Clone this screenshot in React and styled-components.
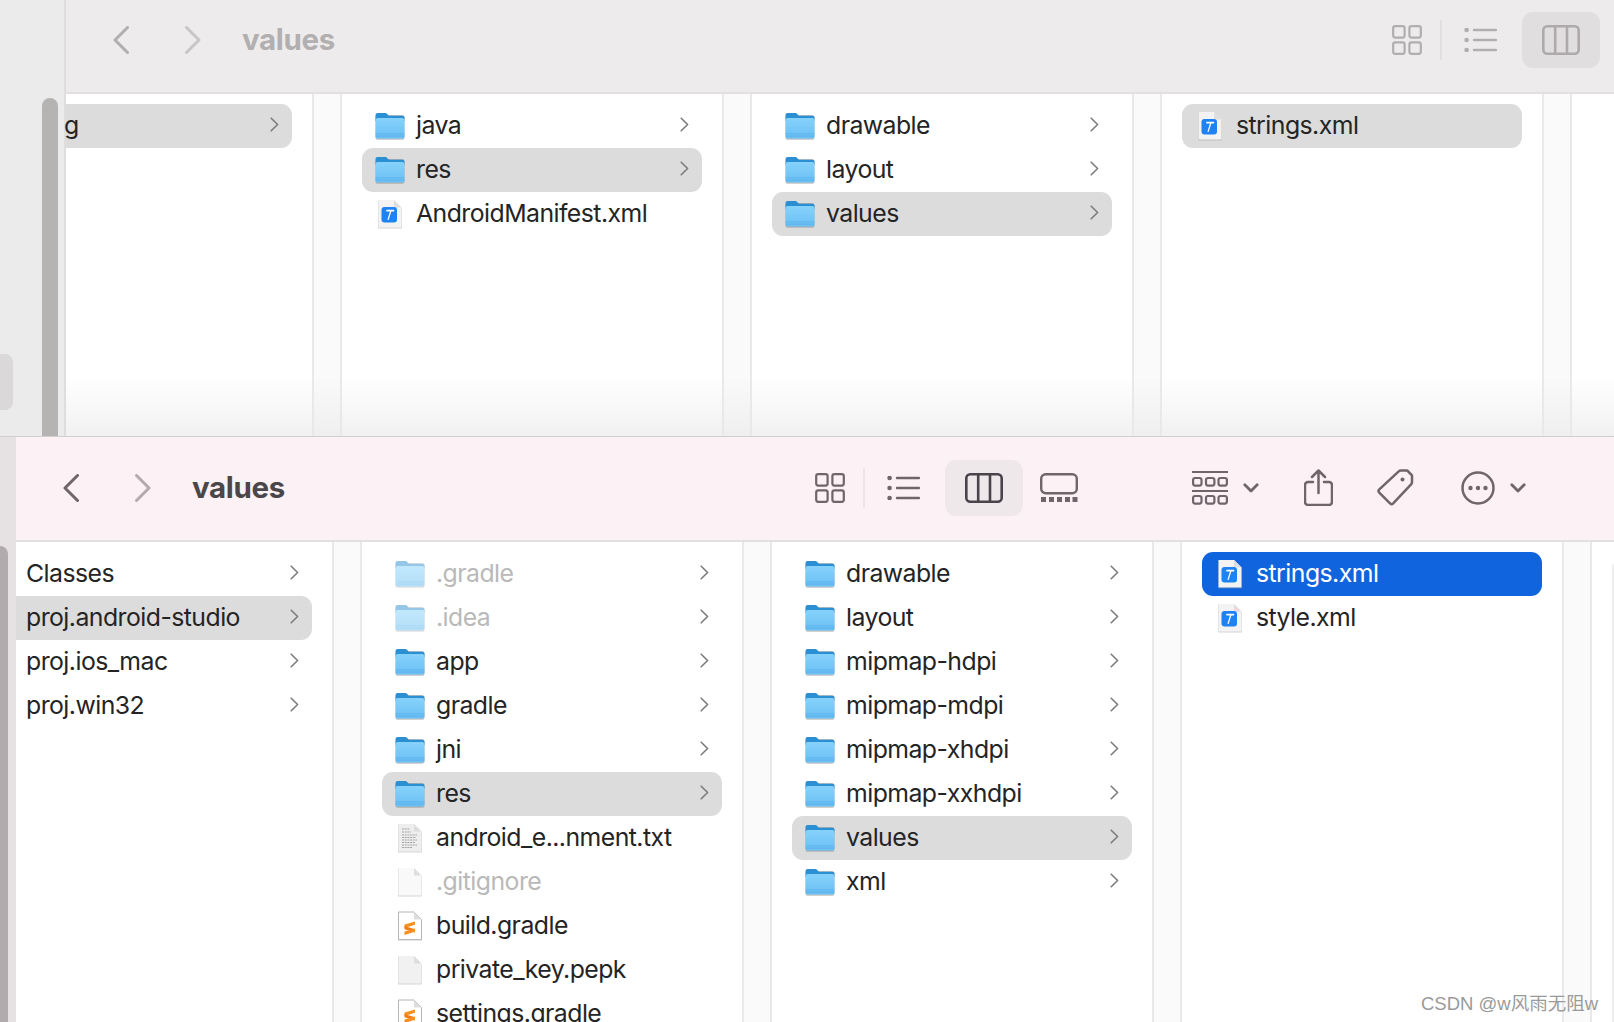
import React from "react";
import styled, { createGlobalStyle } from "styled-components";

const Global = createGlobalStyle`
  html, body { margin: 0; padding: 0; background: #fff; }
  body { font-family: Inter, "Noto Sans", sans-serif; width: 1614px; height: 1022px; overflow: hidden; position: relative; }
  * { box-sizing: border-box; }
`;

const Win = styled.section`
  display: flex;
  height: ${p => p.$h}px;
  overflow: hidden;
  border-bottom: ${p => (p.$edge ? "1px solid #cfcfcf" : "none")};
`;
const Strip = styled.div`
  flex: none;
  width: ${p => p.$w}px;
  position: relative;
  background: ${p => p.$bg};
  border-right: ${p => (p.$edge ? "2px solid #dfdddd" : "none")};
`;
const Thumb = styled.div`
  position: absolute;
  left: ${p => p.$l}px; top: ${p => p.$t}px; bottom: 0; width: ${p => p.$w}px;
  background: ${p => p.$c};
  border-radius: ${p => p.$r};
`;
const SideSel = styled.div`
  position: absolute;
  left: 0; top: 354px; width: 13px; height: 56px;
  background: #dbd8d9;
  border-radius: 0 8px 8px 0;
`;
const Main = styled.div`
  flex: 1; min-width: 0; display: flex; flex-direction: column;
`;
const Toolbar = styled.header`
  flex: none;
  height: ${p => p.$h}px;
  display: flex;
  align-items: center;
  padding: 0 ${p => p.$pr}px ${p => p.$pb}px ${p => p.$pl}px;
  background: ${p => p.$bg};
  color: ${p => p.$fg};
  border-bottom: 2px solid #e2e0e1;
  svg { display: block; flex: none; }
`;
const Title = styled.h1`
  margin: 0 auto 0 41px;
  font: 650 29.5px/1 Inter, sans-serif;
  letter-spacing: -.35px;
  color: ${p => p.$c};
`;
const Slot = styled.span`
  flex: none;
  display: block;
  margin-left: ${p => p.$ml || 0}px;
  opacity: ${p => p.$o || 1};
`;
const Sep = styled.i`
  flex: none;
  display: block;
  width: 2px; height: 40px;
  margin-left: ${p => p.$ml}px;
  background: ${p => p.$c};
`;
const ActiveBtn = styled.span`
  flex: none;
  display: flex; align-items: center; justify-content: center;
  width: 78px; height: 56px;
  margin-left: ${p => p.$ml}px;
  border-radius: 11px;
  background: ${p => p.$bg};
  color: ${p => p.$fg};
`;
const Columns = styled.div`
  flex: 1; min-height: 0; display: flex; background: #fff;
  position: relative;
  &::after {
    content: "";
    display: ${p => (p.$fade ? "block" : "none")};
    position: absolute;
    left: 0; right: 0; bottom: 0; height: 60px;
    background: linear-gradient(to bottom, rgba(235,235,235,0), rgba(232,232,232,.6));
    pointer-events: none;
  }
`;
const Col = styled.div`
  flex: none;
  width: ${p => p.$w}px;
  padding: ${p => p.$pt}px 20px 0 ${p => p.$pl ?? 20}px;
  display: flex; flex-direction: column;
`;
const Gutter = styled.div`
  flex: none;
  width: 30px;
  background: #fafafa;
  border-left: 2px solid #e9e9e9;
  border-right: 2px solid #e9e9e9;
`;
const NextPane = styled.div`
  flex: 1;
  padding: ${p => p.$pt}px 0 0 20px;
  display: flex;
  &::before {
    content: "";
    flex: 1;
    background: #eeeeee;
    border-radius: 8px 0 0 0;
  }
`;
const RowBox = styled.div`
  flex: none;
  height: 44px;
  display: flex; align-items: center;
  padding: 0 13px 0 ${p => p.$pl}px;
  border-radius: ${p => (p.$flat ? "0 11px 11px 0" : "11px")};
  background: ${p => (p.$sel === "blue" ? "#1065de" : p.$sel ? "#dcdcdc" : "transparent")};
  color: ${p => (p.$sel === "blue" ? "#fff" : p.$dim ? "#b9b9b9" : "#242424")};
  font: 400 24.8px/1.24 Inter, sans-serif;
  letter-spacing: -.54px;
  svg { display: block; flex: none; }
`;
const IconSlot = styled.span`
  flex: none; width: 30px; margin-right: 11px;
  display: flex; justify-content: center;
  opacity: ${p => (p.$dim ? 0.5 : 1)};
`;
const Label = styled.span`
  flex: 1; white-space: nowrap; overflow: visible;
  padding-bottom: 2px;
  text-indent: ${p => p.$indent || 0}px;
`;
const ChevWrap = styled.span`
  flex: none; display: block; margin-bottom: 3px;
`;
const Mark = styled.div`
  position: absolute;
  left: 1421px; top: 992px;
  font: 400 18.5px/24px "Liberation Sans", "Noto Sans CJK SC", sans-serif;
  color: #9a9a9a;
  text-shadow: 0 0 1px #fff;
  white-space: nowrap;
`;

const Sv = ({ w, h, sw = 2.5, children }) => (
  <svg width={w} height={h} viewBox={`0 0 ${w} ${h}`} fill="none" stroke="currentColor" strokeWidth={sw} strokeLinecap="round" strokeLinejoin="round">{children}</svg>
);
const Back = () => <Sv w={16} h={28} sw={3}><path d="M14.5 1.5 2 14l12.5 12.5" /></Sv>;
const Fwd = () => <Sv w={16} h={28} sw={3}><path d="M1.5 1.5 14 14 1.5 26.5" /></Sv>;
const Grid = () => (
  <Sv w={30} h={30} sw={2.2}>
    <rect x="1.2" y="1.2" width="11.4" height="11.4" rx="2" /><rect x="17.4" y="1.2" width="11.4" height="11.4" rx="2" />
    <rect x="1.2" y="17.4" width="11.4" height="11.4" rx="2" /><rect x="17.4" y="17.4" width="11.4" height="11.4" rx="2" />
  </Sv>
);
const List = () => (
  <Sv w={33} h={24} sw={2.4}>
    <path d="M10 2h22M10 12h22M10 22h22" />
    <g fill="currentColor" stroke="none"><circle cx="2.6" cy="2" r="2.3" /><circle cx="2.6" cy="12" r="2.3" /><circle cx="2.6" cy="22" r="2.3" /></g>
  </Sv>
);
const ColsIcon = () => (
  <Sv w={38} h={30} sw={2.6}>
    <rect x="1.3" y="1.3" width="35.4" height="27.4" rx="4" /><path d="M13.2 1.5v27M25 1.5v27" />
  </Sv>
);
const Gallery = () => (
  <Sv w={38} h={30} sw={2.4}>
    <rect x="1.2" y="1.2" width="35.6" height="19" rx="4.5" />
    <g fill="currentColor" stroke="none">
      <rect x="1" y="24" width="5" height="5" /><rect x="9" y="24" width="5" height="5" /><rect x="17" y="24" width="5" height="5" /><rect x="25" y="24" width="5" height="5" /><rect x="32.5" y="24" width="5" height="5" />
    </g>
  </Sv>
);
const GroupIcon = () => (
  <Sv w={36} h={34} sw={2.2}>
    <path d="M0 1h36M0 20h36" strokeLinecap="butt" />
    {[7, 25].map(y => [1.1, 14, 26.5].map(x => <rect key={`${x}${y}`} x={x} y={y} width="8.4" height="7.6" rx="2" />))}
  </Sv>
);
const Chev = () => <Sv w={16} h={10} sw={2.8}><path d="M1.8 1.8 8 8l6.2-6.2" /></Sv>;
const Share = () => (
  <Sv w={29} h={37} sw={2.5}>
    <path d="M9 13H4a3 3 0 0 0-3 3v17a3 3 0 0 0 3 3h21a3 3 0 0 0 3-3V16a3 3 0 0 0-3-3h-5" />
    <path d="M14.5 24V1.5M8 8l6.5-6.5L21 8" />
  </Sv>
);
const Tag = () => (
  <Sv w={37} h={37} sw={2.5}>
    <path d="M22 2.2c.5-.5 1-.7 1.8-.7h6.4L35 6.3v7c0 .8-.2 1.3-.7 1.8L16.2 34.4c-1 1-2.2 1-3.2 0L2.3 23.6c-1-1-1-2.2 0-3.2Z" />
    <circle cx="25.5" cy="10.5" r="2" fill="currentColor" stroke="none" />
  </Sv>
);
const More = () => (
  <Sv w={34} h={34} sw={2.5}>
    <circle cx="17" cy="17" r="15.5" />
    <g fill="currentColor" stroke="none"><circle cx="9.5" cy="17" r="2.2" /><circle cx="17" cy="17" r="2.2" /><circle cx="24.5" cy="17" r="2.2" /></g>
  </Sv>
);

const Folder = () => {
  const id = React.useId();
  return (
    <svg width="30" height="28" viewBox="0 0 30 28">
      <defs>
        <linearGradient id={id} x1="0" y1="0" x2="0" y2="1"><stop offset="0" stopColor="#86d2fb" /><stop offset="1" stopColor="#69bff4" /></linearGradient>
      </defs>
      <rect x=".5" y="3" width="29" height="24.8" rx="2.6" fill="#7a7a7a" opacity=".45" />
      <path d="M.5 3.4C.5 1.8 1.4 1 2.8 1h7.2c1 0 1.5.3 2.2 1l1.2 1.2c.4.4.7.5 1.3.5h12.5c1.5 0 2.3.9 2.3 2.3v3H.5Z" fill="#2b8fd3" />
      <path d="M.5 8.4c0-1.4.9-2.3 2.3-2.3h24.4c1.4 0 2.3.9 2.3 2.3v15.9c0 1.5-.9 2.3-2.3 2.3H2.8C1.4 26.6.5 25.8.5 24.3Z" fill={`url(#${id})`} />
      <path d="M.6 21.8h28.8M.6 24h28.8" stroke="#4ea8e3" strokeWidth=".7" opacity=".75" />
    </svg>
  );
};
const Page = ({ children, fill = "#f3f3f3", line }) => (
  <svg width="26" height="30" viewBox="0 0 26 30">
    <path d="M1 1.5h16l8 8v20H1Z" fill="#8d8d8d" opacity=".38" />
    <path d="M1.5 1h15.5l7.5 7.5V28.6h-23Z" fill={fill} stroke={line || "none"} strokeWidth={line ? 1 : 0} />
    <path d="M17 1v7.5h7.5Z" fill="#dedede" />
    {children}
  </svg>
);
const XFile = () => (
  <Page>
    <rect x="4.5" y="8" width="15.5" height="15.5" rx="3" fill="#1f82f2" />
    <path d="M10 11.6h6.4" stroke="#fff" strokeWidth="1.8" strokeLinecap="round" />
    <path d="M13.8 12 11.2 20.4" stroke="#fff" strokeWidth="1.3" strokeLinecap="round" />
  </Page>
);
const TxtFile = () => (
  <Page fill="#eeeeee">
    <path d="M5 6h8M5 9h9M5 12h15M5 14.5h14M5 17h15M5 19.5h13M5 22h15M5 24.5h10" stroke="#a4a4a4" strokeWidth="1.1" strokeDasharray="2 .7" />
  </Page>
);
const Blank = () => <Page fill="#f1f1f1" />;
const Ghost = () => <Page fill="#f9f9f9" />;
const Subl = () => (
  <Page fill="#ffffff" line="#b5b5b5">
    <path d="M7.5 13.6 18 10.4v3.4L7.5 17Z" fill="#fb8f20" />
    <path d="M7.5 15 18 18.2v3.2L7.5 18.2Z" fill="#ef7d14" />
    <path d="M7.5 20.6 18 17.4v3.4L7.5 24Z" fill="#fb8f20" />
  </Page>
);

const Cv = () => (
  <ChevWrap>
    <svg width="9" height="15" viewBox="0 0 9 15" fill="none" stroke="#7c7c7c" strokeWidth="1.6" strokeLinecap="round" strokeLinejoin="round"><path d="M1.2 1.2 7.6 7.5 1.2 13.8" /></svg>
  </ChevWrap>
);
const icons = { f: Folder, x: XFile, t: TxtFile, b: Blank, g: Ghost, s: Subl };

const Row = ({ name, icon, sel, more, dim, flat, pl, indent }) => {
  const I = icons[icon];
  return (
    <RowBox $sel={sel} $dim={dim} $flat={flat} $pl={I ? 13 : pl ?? 10}>
      {I && <IconSlot $dim={dim && icon === "f"}><I /></IconSlot>}
      <Label $indent={indent}>{name}</Label>
      {more && <Cv />}
    </RowBox>
  );
};
const F = (name, sel, dim) => ({ name, icon: "f", more: true, sel, dim });
const Fi = (name, icon, sel, dim) => ({ name, icon, sel, dim });

const Column = ({ w, pt, pl, rows }) => (
  <Col $w={w} $pt={pt} $pl={pl}>{rows.map(r => <Row key={r.name} {...r} />)}</Col>
);

export default function App() {
  return (
    <>
      <Global />
      <Win $h={437} $edge>
        <Strip $w={66} $bg="#ecebeb" $edge>
          <SideSel />
          <Thumb $l={42} $t={98} $w={16} $c="#b6b4b2" $r="8px 8px 0 0" />
        </Strip>
        <Main>
          <Toolbar $h={94} $pl={47} $pr={14} $pb={12} $bg="#eeebec" $fg="#b1aeae">
            <Slot><Back /></Slot>
            <Slot $ml={56} $o={0.6}><Fwd /></Slot>
            <Title $c="#b2afb0">values</Title>
            <Slot><Grid /></Slot>
            <Sep $ml={18} $c="#e2dfe0" />
            <Slot $ml={22}><List /></Slot>
            <ActiveBtn $ml={25} $bg="#e1dedf" $fg="#aeaaab"><ColsIcon /></ActiveBtn>
          </Toolbar>
          <Columns $fade>
            <Column w={246} pt={10} pl={0} rows={[{ name: "g", sel: true, more: true, flat: true, pl: 0, indent: -2 }]} />
            <Gutter />
            <Column w={380} pt={10} rows={[F("java"), F("res", true), Fi("AndroidManifest.xml", "x")]} />
            <Gutter />
            <Column w={380} pt={10} rows={[F("drawable"), F("layout"), F("values", true)]} />
            <Gutter />
            <Column w={380} pt={10} rows={[Fi("strings.xml", "x", true)]} />
            <Gutter />
          </Columns>
        </Main>
      </Win>
      <Win $h={585}>
        <Strip $w={16} $bg="#e6e1e3">
          <Thumb $l={0} $t={109} $w={8} $c="#b1abad" $r="0 8px 0 0" />
        </Strip>
        <Main>
          <Toolbar $h={105} $pl={47} $pr={88} $pb={2} $bg="#fcf1f4" $fg="#6f656a">
            <Slot><Back /></Slot>
            <Slot $ml={56} $o={0.5}><Fwd /></Slot>
            <Title $c="#4a4649">values</Title>
            <Slot><Grid /></Slot>
            <Sep $ml={18} $c="#efe5e8" />
            <Slot $ml={22}><List /></Slot>
            <ActiveBtn $ml={25} $bg="#eee8ea" $fg="#48444a"><ColsIcon /></ActiveBtn>
            <Slot $ml={17}><Gallery /></Slot>
            <Slot $ml={114}><GroupIcon /></Slot>
            <Slot $ml={15}><Chev /></Slot>
            <Slot $ml={45}><Share /></Slot>
            <Slot $ml={44}><Tag /></Slot>
            <Slot $ml={47}><More /></Slot>
            <Slot $ml={15}><Chev /></Slot>
          </Toolbar>
          <Columns>
            <Column w={316} pt={10} pl={0} rows={[
              { name: "Classes", more: true },
              { name: "proj.android-studio", more: true, sel: true, flat: true },
              { name: "proj.ios_mac", more: true },
              { name: "proj.win32", more: true },
            ]} />
            <Gutter />
            <Column w={380} pt={10} rows={[
              F(".gradle", false, true), F(".idea", false, true), F("app"), F("gradle"), F("jni"), F("res", true),
              Fi("android_e...nment.txt", "t"), Fi(".gitignore", "g", false, true), Fi("build.gradle", "s"), Fi("private_key.pepk", "b"), Fi("settings.gradle", "s"),
            ]} />
            <Gutter />
            <Column w={380} pt={10} rows={[
              F("drawable"), F("layout"), F("mipmap-hdpi"), F("mipmap-mdpi"), F("mipmap-xhdpi"), F("mipmap-xxhdpi"), F("values", true), F("xml"),
            ]} />
            <Gutter />
            <Column w={380} pt={10} rows={[Fi("strings.xml", "x", "blue"), Fi("style.xml", "x")]} />
            <Gutter />
            <NextPane $pt={22} />
          </Columns>
        </Main>
      </Win>
      <Mark>CSDN @w风雨无阻w</Mark>
    </>
  );
}
